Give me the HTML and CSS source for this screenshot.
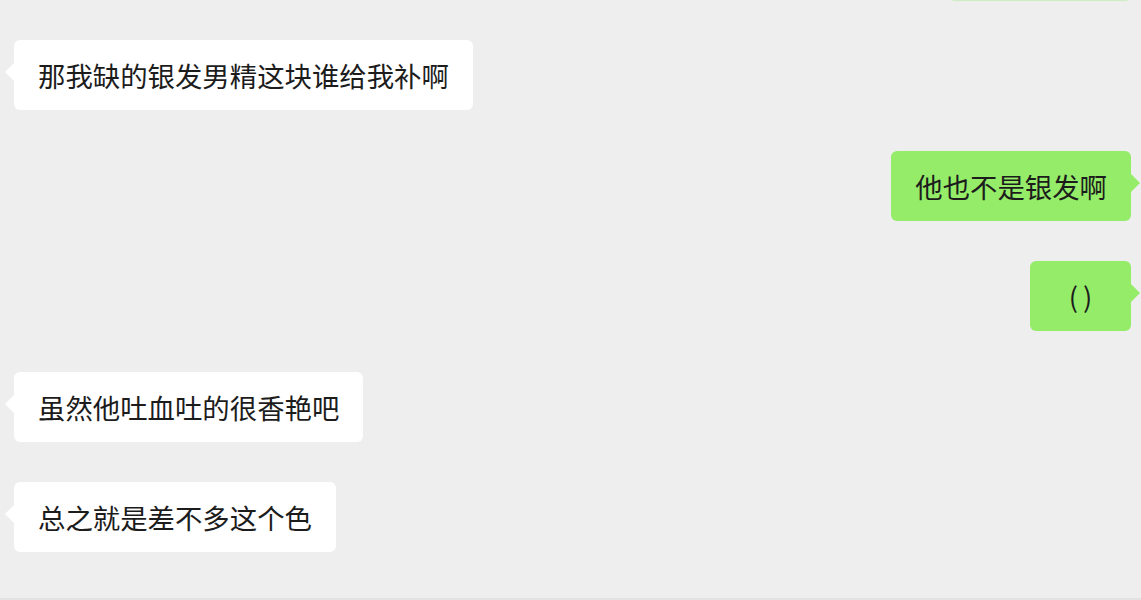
FILE: index.html
```html
<!DOCTYPE html>
<html lang="zh-CN">
<head>
  <meta charset="UTF-8">
  <meta name="viewport" content="width=device-width, initial-scale=1.0">
  <title>聊天</title>
  <link rel="stylesheet" href="styles.css">
</head>
<body>
  <div id="chat">
    <div id="messages">
      <!-- previous message, scrolled almost out of view -->
      <div class="row sent cut">
        <div class="message edge"></div>
      </div>
      <div class="row received">
        <div class="message">那我缺的银发男精这块谁给我补啊</div>
      </div>
      <div class="row sent">
        <div class="message">他也不是银发啊</div>
      </div>
      <div class="row sent">
        <div class="message short">()</div>
      </div>
      <div class="row received">
        <div class="message">虽然他吐血吐的很香艳吧</div>
      </div>
      <div class="row received">
        <div class="message">总之就是差不多这个色</div>
      </div>
    </div>
    <div id="footer"></div>
  </div>
</body>
</html>
```

FILE: styles.css
```css
body {
  font-family: 'Noto Sans CJK SC', 'Noto Sans', sans-serif;
  margin: 0;
  padding: 0;
  background-color: #eeeeee;
}
#chat {
  height: 600px;
  display: flex;
  flex-direction: column;
  overflow: hidden;
}
#messages {
  flex: 1;
  display: flex;
  flex-direction: column;
  gap: 40.5px;
  padding: 0 10px 0 14px;
}
.row {
  display: flex;
}
.row.cut {
  margin-top: -69px;
  margin-bottom: -1.5px;
  opacity: 0.35;
}
.received {
  justify-content: flex-start;
}
.sent {
  justify-content: flex-end;
}
.message {
  position: relative;
  height: 70px;
  line-height: 70px;
  padding: 0 24px;
  border-radius: 6px;
  font-size: 27.4px;
  color: #1c1c1c;
  white-space: nowrap;
  box-sizing: border-box;
}
.message.edge {
  width: 182px;
}
.message.short {
  min-width: 101px;
  text-align: center;
  letter-spacing: 5px;
  text-indent: 5px;
}
.received .message {
  background-color: #ffffff;
}
.sent .message {
  background-color: #95ec69;
}
.message::before {
  content: "";
  position: absolute;
  top: 23px;
  border-top: 9px solid transparent;
  border-bottom: 9px solid transparent;
}
.received .message::before {
  left: -9px;
  border-right: 9px solid #ffffff;
}
.sent .message::before {
  right: -9px;
  border-left: 9px solid #95ec69;
}
#footer {
  height: 2px;
  background-color: #e2e2e2;
}
```
